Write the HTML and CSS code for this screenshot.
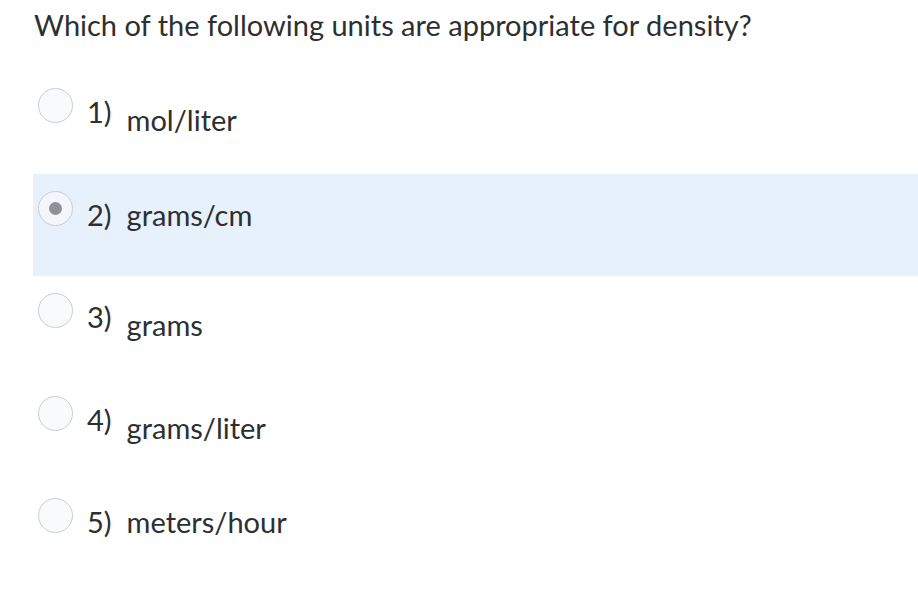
FILE: index.html
```html
<!DOCTYPE html>
<html lang="en">
<head>
<meta charset="utf-8">
<title>Density question</title>
<link rel="stylesheet" href="styles.css">
</head>
<body>
<div class="question">
  <h1 class="prompt">Which of the following units are appropriate for density?</h1>
  <ul class="answers">
    <li class="answer">
      <span class="radio"></span>
      <span class="label"><span class="num">1)</span><span class="text low">mol/liter</span></span>
    </li>
    <li class="answer selected">
      <span class="radio"><span class="dot"></span></span>
      <span class="label"><span class="num">2)</span><span class="text">grams/cm</span></span>
    </li>
    <li class="answer">
      <span class="radio"></span>
      <span class="label"><span class="num">3)</span><span class="text low">grams</span></span>
    </li>
    <li class="answer">
      <span class="radio"></span>
      <span class="label"><span class="num">4)</span><span class="text low">grams/liter</span></span>
    </li>
    <li class="answer">
      <span class="radio"></span>
      <span class="label"><span class="num">5)</span><span class="text">meters/hour</span></span>
    </li>
  </ul>
</div>
</body>
</html>
```

FILE: styles.css
```css
html, body {
  margin: 0;
  padding: 0;
  background: #ffffff;
}

body {
  font-family: Lato, "Noto Sans", sans-serif;
  color: #2d2f31;
}

.question {
  padding-left: 33px;
}

.prompt {
  margin: 7px 0 0 1px;
  font-size: 29px;
  font-weight: 400;
  line-height: 35px;
}

.answers {
  list-style: none;
  margin: 29px 0 0 0;
  padding: 0;
}

.answer {
  display: flex;
  align-items: flex-start;
  height: 102.6px;
  box-sizing: border-box;
  padding: 17px 0 0 5px;
}

.answer.selected {
  background: #e7f1fb;
}

.radio {
  width: 35px;
  height: 35px;
  box-sizing: border-box;
  border: 1px solid #c9ced2;
  border-radius: 50%;
  background: #f8fafc;
  flex: none;
  display: flex;
  align-items: center;
  justify-content: center;
}

.selected .radio {
  background: #f3f7fc;
}

.dot {
  width: 13px;
  height: 13px;
  border-radius: 50%;
  background: #8d9095;
}

.label {
  margin-left: 14px;
  margin-top: 6px;
  font-size: 29px;
  line-height: 35px;
  white-space: nowrap;
}

.num {
  display: inline-block;
  margin-right: 15px;
}

.text.low {
  vertical-align: -8px;
}
```
